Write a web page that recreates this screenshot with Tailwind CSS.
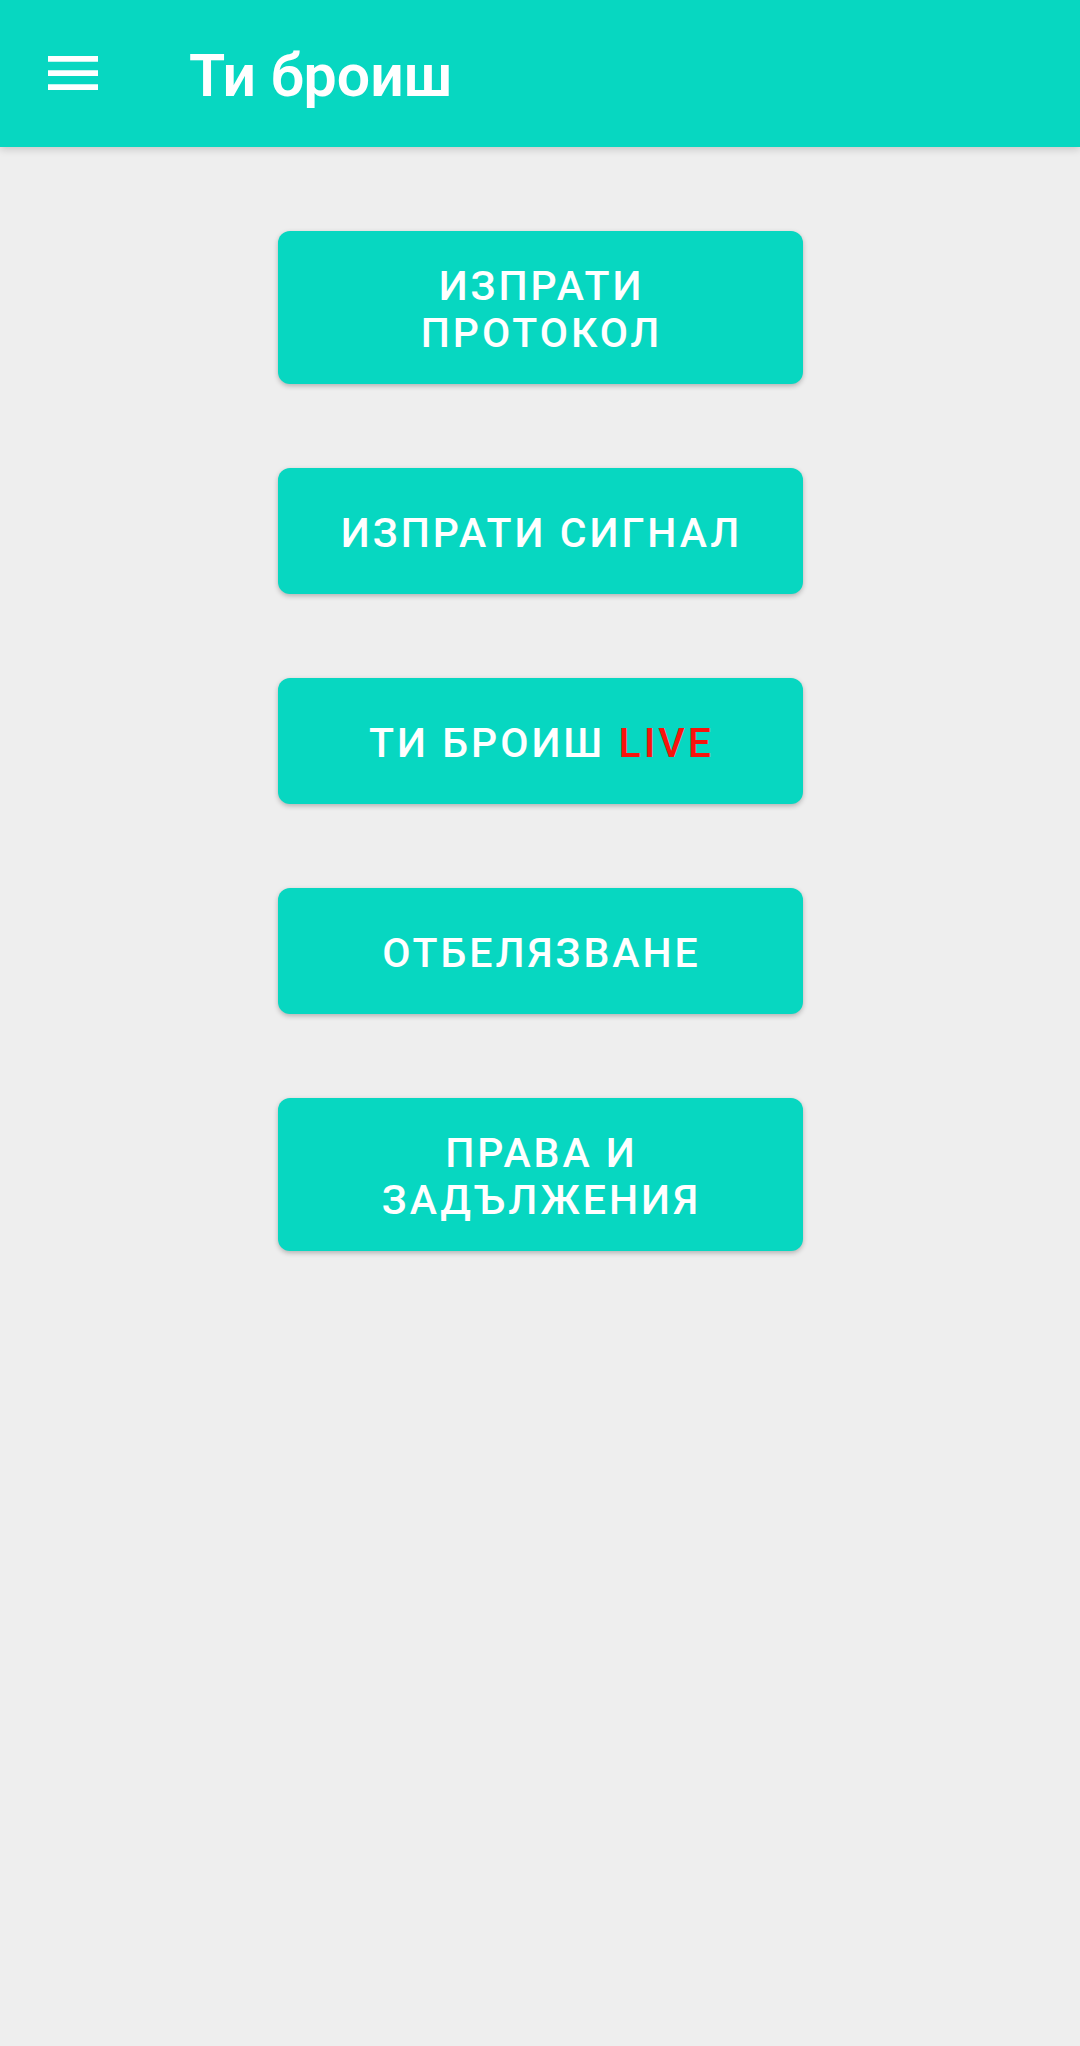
<!DOCTYPE html>
<html lang="bg">
<head>
<meta charset="utf-8">
<meta name="viewport" content="width=device-width, initial-scale=1">
<title>Ти броиш</title>
<script src="https://cdn.jsdelivr.net/npm/@tailwindcss/browser@4"></script>
</head>
<body class="min-h-screen bg-[#eeeeee] font-[Roboto,sans-serif] text-white">
<header class="flex h-[147px] items-center bg-[#07d7c1] pl-12 shadow-[0_2px_8px_rgba(0,0,0,0.18)]">
<button type="button" aria-label="Меню" class="mr-[91px] h-[51px] w-[50px]">
<svg viewBox="0 0 50 51" class="h-full w-full" fill="currentColor" aria-hidden="true"><path d="M0 8h50v5.7H0zM0 22.2h50v5.7H0zM0 36.3h50v5.7H0z"/></svg>
</button>
<h1 class="pt-1.5 text-[59px] font-semibold">Ти броиш</h1>
</header>
<main class="flex flex-col items-center gap-[84px] px-6 py-[84px]">
<button type="button" class="min-h-[126px] w-full max-w-[525px] rounded-xl bg-[#07d7c1] pr-12 pl-[51px] pt-8 pb-[27px] text-[41px] leading-[47px] font-medium tracking-[3px] shadow-[0_2px_5px_rgba(0,0,0,0.25)]">ИЗПРАТИ ПРОТОКОЛ</button>
<button type="button" class="min-h-[126px] w-full max-w-[525px] rounded-xl bg-[#07d7c1] pr-12 pl-[51px] pt-8 pb-[27px] text-[41px] leading-[47px] font-medium tracking-[3px] shadow-[0_2px_5px_rgba(0,0,0,0.25)]">ИЗПРАТИ СИГНАЛ</button>
<button type="button" class="min-h-[126px] w-full max-w-[525px] rounded-xl bg-[#07d7c1] pr-12 pl-[51px] pt-8 pb-[27px] text-[41px] leading-[47px] font-medium tracking-[3px] shadow-[0_2px_5px_rgba(0,0,0,0.25)]">ТИ БРОИШ <span class="text-[#f9130c]">LIVE</span></button>
<button type="button" class="min-h-[126px] w-full max-w-[525px] rounded-xl bg-[#07d7c1] pr-12 pl-[51px] pt-8 pb-[27px] text-[41px] leading-[47px] font-medium tracking-[3px] shadow-[0_2px_5px_rgba(0,0,0,0.25)]">ОТБЕЛЯЗВАНЕ</button>
<button type="button" class="min-h-[126px] w-full max-w-[525px] rounded-xl bg-[#07d7c1] pr-12 pl-[51px] pt-8 pb-[27px] text-[41px] leading-[47px] font-medium tracking-[3px] shadow-[0_2px_5px_rgba(0,0,0,0.25)]">ПРАВА И ЗАДЪЛЖЕНИЯ</button>
</main>
</body>
</html>
